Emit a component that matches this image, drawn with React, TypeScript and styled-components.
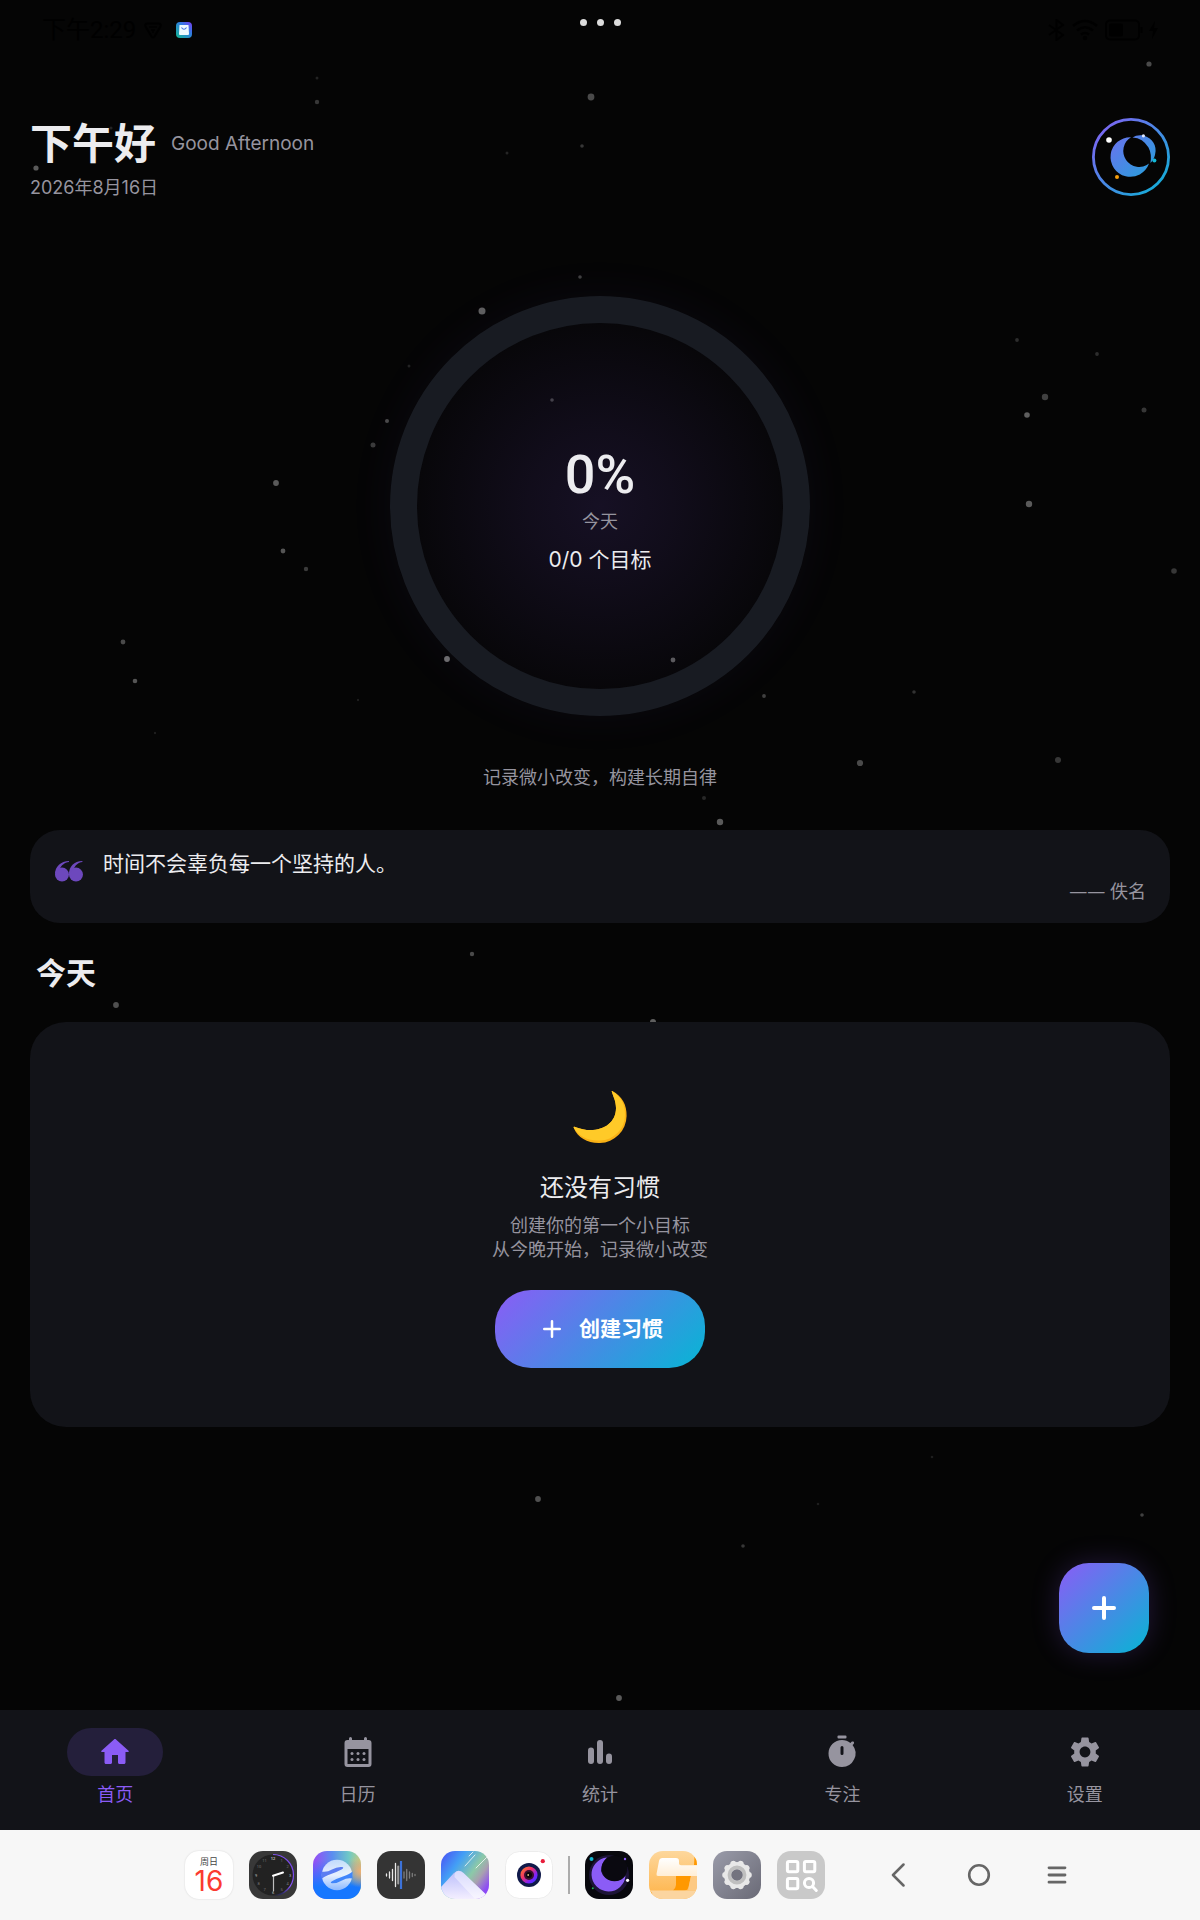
import React, { useState } from "react";
import styled, { createGlobalStyle, css } from "styled-components";
import { MdSettings } from "react-icons/md";

const color = {
  page: "#050505",
  surface: "#121318",
  track: "#181b22",
  text: "#ececef",
  muted: "#96949f",
  violet: "#8b5cf6",
  cyan: "#06b6d4",
  dock: "#f7f7f7",
  dockInk: "#666666",
};

const bodyFont = `Inter, "Noto Sans CJK SC", sans-serif`;
const displayFont = `Roboto, "Noto Sans CJK SC", sans-serif`;
const cjkFont = `"Noto Sans CJK SC", sans-serif`;
const brand = `linear-gradient(135deg, ${color.violet}, ${color.cyan})`;

const GlobalStyle = createGlobalStyle`
  *, *::before, *::after { box-sizing: border-box; }
  body { margin: 0; background: ${color.page}; }
  h1, h2, h3, p, blockquote, figure { margin: 0; font-weight: 400; }
  button { border: 0; padding: 0; background: none; color: inherit; font: inherit; cursor: pointer; }
  svg { display: block; }
`;

const Screen = styled.div`
  position: relative;
  display: flex;
  flex-direction: column;
  min-height: 100vh;
  background: ${color.page};
  color: ${color.text};
  font-family: ${bodyFont};
  font-size: 18px;
  line-height: 24px;
`;

/* ---------- star field ---------- */

const Sky = styled.svg`
  position: absolute;
  inset: 0;
  width: 100%;
  height: 100%;
  pointer-events: none;
`;

const stars: [number, number, number, number][] = [
  [317, 78, 1.5, 0.12], [317, 102, 2.2, 0.2], [591, 97, 3.4, 0.28], [1149, 64, 2.6, 0.28],
  [582, 146, 1.8, 0.2], [507, 153, 1.5, 0.13], [36, 168, 2.6, 0.34], [111, 128, 1.6, 0.12],
  [580, 277, 1.8, 0.24], [482, 311, 3.5, 0.36], [409, 366, 1.5, 0.12], [387, 421, 2, 0.28],
  [373, 445, 2.5, 0.22], [552, 400, 1.8, 0.24], [276, 483, 2.9, 0.34], [283, 551, 2.4, 0.32],
  [306, 569, 2.2, 0.22], [123, 642, 2.4, 0.28], [135, 681, 2.3, 0.32], [155, 733, 1.2, 0.1],
  [358, 700, 1.2, 0.1], [447, 659, 2.9, 0.42], [673, 660, 2.4, 0.34], [764, 696, 1.9, 0.24],
  [914, 692, 1.8, 0.18], [860, 763, 3.1, 0.28], [1058, 760, 3, 0.2], [704, 798, 2, 0.14],
  [720, 822, 3.2, 0.34], [1017, 340, 1.9, 0.16], [1097, 354, 1.9, 0.16], [1045, 397, 3.2, 0.24],
  [1027, 415, 2.8, 0.36], [1144, 410, 2.5, 0.2], [1029, 504, 3.2, 0.34], [1174, 571, 2.8, 0.2],
  [472, 954, 2.2, 0.28], [116, 1005, 2.9, 0.3], [653, 1022, 3, 0.36], [538, 1499, 2.9, 0.3],
  [743, 1546, 1.8, 0.2], [818, 1504, 1.3, 0.1], [932, 1457, 1.3, 0.1], [1142, 1515, 1.8, 0.24],
  [619, 1698, 2.9, 0.34],
];

/* ---------- status bar ---------- */

const StatusBar = styled.div`
  position: relative;
  display: grid;
  grid-template-columns: 1fr auto 1fr;
  align-items: center;
  height: 60px;
  padding: 0 42px;
  color: #000000;
`;

const StatusGroup = styled.div<{ $end?: boolean }>`
  display: flex;
  align-items: center;
  gap: ${(p) => (p.$end ? 6 : 8)}px;
  ${(p) => p.$end && css`justify-content: flex-end;`}
`;

const Clock = styled.time`
  font-family: ${displayFont};
  font-size: 24px;
  line-height: 30px;
`;

const NoticeIcon = styled.svg`
  margin-left: 6px;
`;

const WindowDots = styled.div`
  display: flex;
  gap: 10px;
  align-self: start;
  padding-top: 19px;

  i {
    width: 7px;
    height: 7px;
    border-radius: 50%;
    background: #dcdcdc;
  }
`;

/* ---------- content ---------- */

const Main = styled.main`
  position: relative;
  flex: 1;
  display: flex;
  flex-direction: column;
  padding: 58px 30px 180px;
`;

const Header = styled.header`
  display: flex;
  justify-content: space-between;
  align-items: flex-start;
`;

const Greeting = styled.div`
  display: flex;
  align-items: center;
  gap: 15px;
  height: 52px;
`;

const GreetingTitle = styled.h1`
  font-size: 42px;
  line-height: 52px;
  font-weight: 700;
`;

const GreetingNote = styled.span`
  font-size: 19px;
  color: ${color.muted};
`;

const DateLine = styled.p`
  margin-top: 6px;
  color: ${color.muted};
`;

const ProgressFigure = styled.section`
  display: flex;
  flex-direction: column;
  align-items: center;
  margin-top: 96px;
`;

const Ring = styled.div`
  display: flex;
  flex-direction: column;
  align-items: center;
  width: 420px;
  height: 420px;
  padding-top: 122px;
  border: 27px solid ${color.track};
  border-radius: 50%;
  background: radial-gradient(circle closest-side, rgba(139, 92, 246, 0.13) 0%, rgba(139, 92, 246, 0.09) 40%, rgba(139, 92, 246, 0.02) 100%);
  box-shadow: 0 0 50px rgba(139, 92, 246, 0.05);
`;

const Percent = styled.strong`
  font-family: ${displayFont};
  font-size: 54px;
  line-height: 60px;
  font-weight: 500;
`;

const RingLabel = styled.span`
  margin-top: 5px;
  color: ${color.muted};
`;

const RingCount = styled.span`
  margin-top: 12px;
  font-size: 21px;
  line-height: 28px;
`;

const Slogan = styled.p`
  margin-top: 50px;
  color: ${color.muted};
`;

const QuoteCard = styled.figure`
  display: flex;
  gap: 20px;
  margin-top: 40px;
  padding: 16px 24px 20px 25px;
  border-radius: 30px;
  background: ${color.surface};

  > svg {
    margin-top: 15px;
  }
`;

const QuoteBody = styled.div`
  flex: 1;
  display: flex;
  flex-direction: column;
  gap: 1px;

  blockquote {
    font-family: ${cjkFont};
    font-size: 21px;
    line-height: 32px;
  }

  figcaption {
    align-self: flex-end;
    font-family: "Noto Sans", ${cjkFont};
    color: ${color.muted};
  }
`;

const SectionTitle = styled.h2`
  margin-top: 32px;
  padding-left: 6px;
  font-size: 30px;
  line-height: 36px;
  font-weight: 700;
`;

const EmptyCard = styled.section`
  display: flex;
  flex-direction: column;
  align-items: center;
  margin-top: 31px;
  padding: 68px 24px 59px;
  border-radius: 36px;
  background: ${color.surface};
`;

const EmptyTitle = styled.h3`
  margin-top: 26px;
  font-size: 24px;
  line-height: 36px;
`;

const EmptyHint = styled.p`
  margin-top: 8px;
  text-align: center;
  color: ${color.muted};
`;

const CreateButton = styled.button`
  display: flex;
  align-items: center;
  justify-content: center;
  gap: 18px;
  width: 210px;
  height: 78px;
  margin-top: 28px;
  padding-left: 6px;
  border-radius: 36px;
  background: ${brand};
  color: #ffffff;
  font-size: 21px;
  font-weight: 700;
`;

const FloatingButton = styled.button`
  position: absolute;
  right: 51px;
  bottom: 57px;
  display: grid;
  place-items: center;
  width: 90px;
  height: 90px;
  border-radius: 30px;
  background: ${brand};
  color: #ffffff;
  box-shadow: 0 0 28px rgba(139, 92, 246, 0.22);
`;

/* ---------- tabs ---------- */

const TabBar = styled.nav`
  position: relative;
  display: grid;
  grid-template-columns: repeat(5, 1fr);
  gap: 12px;
  height: 120px;
  padding-top: 18px;
  background: ${color.surface};
`;

const Tab = styled.button<{ $active: boolean }>`
  display: flex;
  flex-direction: column;
  align-items: center;
  align-self: start;
  gap: 7px;
  color: ${(p) => (p.$active ? color.violet : color.muted)};
`;

const TabPill = styled.span<{ $active: boolean }>`
  display: grid;
  place-items: center;
  width: 96px;
  height: 48px;
  border-radius: 24px;
  background: ${(p) => (p.$active ? "#241f3b" : "transparent")};
`;

/* ---------- dock ---------- */

const Dock = styled.footer`
  position: relative;
  display: flex;
  align-items: center;
  justify-content: center;
  gap: 52px;
  height: 90px;
  padding-left: 66px;
  background: ${color.dock};
`;

const AppRow = styled.div`
  display: flex;
  align-items: center;
  gap: 16px;
`;

const AppIcon = styled.button`
  width: 48px;
  height: 48px;
  border-radius: 14px;
  overflow: hidden;
`;

const CalendarTile = styled(AppIcon)`
  display: flex;
  flex-direction: column;
  align-items: center;
  padding-top: 5px;
  background: #ffffff;
  box-shadow: 0 0 2px rgba(0, 0, 0, 0.14);
  color: #444444;
  font-size: 9px;
  line-height: 12px;

  b {
    font-size: 28px;
    line-height: 26px;
    font-weight: 400;
    color: #fb3b30;
  }
`;

const DockDivider = styled.hr`
  width: 2px;
  height: 38px;
  margin: 0 -1px;
  border: 0;
  background: #acacac;
`;

const SystemKeys = styled.div`
  display: flex;
  align-items: center;
  gap: 30px;
  color: ${color.dockInk};
`;

const SystemKey = styled.button`
  display: grid;
  place-items: center;
  width: 48px;
  height: 48px;
`;

/* ---------- drawings ---------- */

const Plus = ({ size, width }: { size: number; width: number }) => (
  <svg width={size} height={size} viewBox={`0 0 ${size} ${size}`} aria-hidden="true">
    <path
      d={`M${size / 2} ${width / 2}V${size - width / 2}M${width / 2} ${size / 2}H${size - width / 2}`}
      stroke="currentColor"
      strokeWidth={width}
      strokeLinecap="round"
    />
  </svg>
);

const MoonAvatar = () => (
  <svg width="78" height="78" viewBox="0 0 78 78" aria-hidden="true">
    <defs>
      <linearGradient id="avatar" x1="0" y1="0" x2="78" y2="78" gradientUnits="userSpaceOnUse">
        <stop stopColor={color.violet} />
        <stop offset="1" stopColor={color.cyan} />
      </linearGradient>
    </defs>
    <circle cx="39" cy="39" r="37.6" fill="none" stroke="url(#avatar)" strokeWidth="2.8" />
    <path
      fill="url(#avatar)"
      d="M39 19.2A19.8 19.8 0 1 0 57 45.6A16 16 0 1 1 39 19.2Z"
    />
    <path
      fill="url(#avatar)"
      d="M40.500 19.400Q44 17 49 17.200C58 18 64 25 63.600 33Q63 41 58.400 45Q60 36 56.500 29.500Q51 20 40.500 19.400Z"
    />
    <circle cx="17" cy="22" r="2.8" fill="#fff" />
    <circle cx="51.4" cy="17.8" r="1.6" fill="#dfe8ff" />
    <circle cx="62.4" cy="42.5" r="2" fill="#12b9d6" />
    <circle cx="25" cy="59" r="2" fill="#f59e0b" />
  </svg>
);

const QuoteMark = () => (
  <svg width="28" height="21" viewBox="0 0 28 21" fill="#6d48bd" aria-hidden="true">
    <circle cx="7" cy="13.6" r="7" />
    <circle cx="21" cy="13.6" r="7" />
    <path d="M0 13.2C0 5.4 6 .2 14 0v.9C9.4 1.5 6 4.4 5 7.6Z" />
    <path d="M14 13.2C14 5.4 19 .2 27.4 0v.9C23 1.5 20 4.4 19 7.6Z" />
  </svg>
);

const CrescentMoon = () => (
  <svg width="54" height="54" viewBox="0 0 54 54" aria-hidden="true">
    <path d="M39.2 1C49 6 54 15 53.6 26A27.500 27.500 0 0 1 27 53C15 53.5 5 48 .8 38C.4 37 1 36.6 2 37C22 45 43 37 43 18C43 11 40 6 38.8 1.8C38.6 1 38.8 .8 39.2 1Z" fill="#f9b115" />
    <path d="M39.2 1C48 6.5 52.4 15 52 25A25.500 25.500 0 0 1 27 50.5C15 51 6 46.5 .8 38C.4 37 1 36.6 2 37C22 45 43 37 43 18C43 11 40 6 38.8 1.8C38.6 1 38.8 .8 39.2 1Z" fill="#ffca28" />
  </svg>
);

const tabIcon = { width: 36, height: 36, viewBox: "0 0 24 24", fill: "currentColor", "aria-hidden": true };

const HomeIcon = () => (
  <svg {...tabIcon}>
    <path d="M10 19v-5h4v5c0 .55.45 1 1 1h3c.55 0 1-.45 1-1v-7h1.7c.46 0 .68-.57.33-.87L12.67 3.6c-.38-.34-.96-.34-1.34 0l-8.36 7.53c-.34.3-.13.87.33.87H5v7c0 .55.45 1 1 1h3c.55 0 1-.45 1-1z" />
  </svg>
);

const MonthIcon = () => (
  <svg {...tabIcon}>
    <path
      fillRule="evenodd"
      d="M8 3v1h8V3a1 1 0 0 1 2 0v1h1a2 2 0 0 1 2 2v14a2 2 0 0 1-2 2H5a2 2 0 0 1-2-2V6a2 2 0 0 1 2-2h1V3a1 1 0 0 1 2 0ZM5 10v10h14V10Z"
    />
    {[13, 17].map((y) => [8, 12, 16].map((x) => <circle key={`${x}-${y}`} cx={x} cy={y} r="1" />))}
  </svg>
);

const BarsIcon = () => (
  <svg {...tabIcon}>
    <rect x="4" y="9" width="4" height="11" rx="2" />
    <rect x="10" y="4" width="4" height="16" rx="2" />
    <rect x="16" y="13" width="4" height="7" rx="2" />
  </svg>
);

const TimerIcon = () => (
  <svg {...tabIcon}>
    <rect x="9" y="1" width="6" height="2" rx=".7" />
    <path
      fillRule="evenodd"
      d="M19.03 7.39l.75-.75c.38-.38.39-1.01 0-1.4l-.01-.01c-.39-.39-1.01-.38-1.4 0l-.75.75C16.07 4.74 14.12 4 12 4c-4.8 0-8.88 3.96-9 8.76A9 9 0 0 0 12 22a9 9 0 0 0 7.03-14.61ZM13 13a1 1 0 0 1-2 0V9a1 1 0 0 1 2 0Z"
    />
  </svg>
);

const art = { width: 48, height: 48, viewBox: "0 0 48 48", "aria-hidden": true };

const ClockArt = () => (
  <svg {...art}>
    <defs>
      <linearGradient id="clockEdge" x1="1" y1="0" x2="0" y2="1">
        <stop stopColor="#6d3fd8" />
        <stop offset=".45" stopColor="#8a55ff" />
        <stop offset=".75" stopColor="#2b2a66" />
        <stop offset="1" stopColor="#2c2c2c" />
      </linearGradient>
    </defs>
    <rect width="48" height="48" fill="#383838" />
    <circle cx="24" cy="24" r="20.5" fill="#222222" />
    <path d="M24 3.5A20.5 20.5 0 0 1 24 44.5" fill="none" stroke="url(#clockEdge)" strokeWidth="1.2" />
    <g fill="#777" fontFamily="Roboto, sans-serif" fontSize="4" textAnchor="middle">
      <text x="24" y="9" fill="#fff">12</text>
      <text x="32.5" y="11">1</text>
      <text x="38.5" y="17">2</text>
      <text x="41" y="25.5" fill="#bbb">3</text>
      <text x="38.5" y="34">4</text>
      <text x="32.5" y="39.5">5</text>
      <text x="24" y="42.5" fill="#bbb">6</text>
      <text x="15.5" y="39.5">7</text>
      <text x="9.5" y="34">8</text>
      <text x="7" y="25.5" fill="#bbb">9</text>
      <text x="10" y="17">10</text>
      <text x="15.5" y="11">11</text>
    </g>
    <path d="M24.5 25v15" stroke="#bdbdbd" strokeWidth="1.2" strokeLinecap="round" />
    <path d="M24 24.8L34 21.5" stroke="#fff" strokeWidth="2" strokeLinecap="round" />
  </svg>
);

const BrowserArt = () => (
  <svg {...art}>
    <defs>
      <linearGradient id="bBase" x1="0" y1="0" x2="1" y2="0">
        <stop stopColor="#9a4bf5" />
        <stop offset=".4" stopColor="#5a8df0" />
        <stop offset=".75" stopColor="#6fc9c6" />
        <stop offset="1" stopColor="#b9cf86" />
      </linearGradient>
      <linearGradient id="bFade" x1="0" y1="0" x2="0" y2="1">
        <stop offset=".2" stopColor="#1677ff" stopOpacity="0" />
        <stop offset=".75" stopColor="#1677ff" />
      </linearGradient>
      <radialGradient id="bWarm" cx="1" cy=".42" r=".35">
        <stop stopColor="#f0b070" />
        <stop offset="1" stopColor="#f0b070" stopOpacity="0" />
      </radialGradient>
      <linearGradient id="bGlobe" x1="0" y1="0" x2="0" y2="1">
        <stop stopColor="#cfe4ff" />
        <stop offset=".5" stopColor="#ffffff" />
        <stop offset="1" stopColor="#9cc2ff" />
      </linearGradient>
    </defs>
    <rect width="48" height="48" fill="url(#bBase)" />
    <rect width="48" height="48" fill="url(#bFade)" />
    <rect width="48" height="48" fill="url(#bWarm)" />
    <circle cx="24" cy="24" r="15.2" fill="url(#bGlobe)" fillOpacity=".88" />
    <path d="M8.500 20.500Q14 21.500 19 18.500T29 16Q31.500 16.500 29 18.300Q25 20.500 18 23T8.500 28Z" fill="#5b7df2" />
    <path d="M39.500 27.500Q34 26.500 29 29.500T19 32.300Q16.500 32 19 30.300Q23 27.800 30 25.500T39.500 20.500Z" fill="#3f86fb" />
  </svg>
);

const RecorderArt = () => (
  <svg {...art}>
    <rect width="48" height="48" fill="#343434" />
    <g strokeLinecap="round" strokeWidth="1.3" stroke="#e9e9e9">
      <path d="M9.500 23v2M12.500 21v6M15.500 18.500v11M18.500 12.500v23" />
      <path d="M21.200 15.500v17" stroke="#9b9b9b" strokeWidth="2" />
      <path d="M27 21v6M29.700 18.500v11M32.500 21v6M35.300 22.500v3M38 23.500v1" stroke="#7d7d7d" />
    </g>
    <path d="M24 10v28" stroke="#3c72d9" strokeWidth="2.200" />
  </svg>
);

const GalleryArt = () => (
  <svg {...art}>
    <defs>
      <linearGradient id="gSky" x1="0" y1="0" x2="1" y2=".7">
        <stop stopColor="#4a4cf5" />
        <stop offset=".35" stopColor="#43a0f5" />
        <stop offset=".65" stopColor="#8cc9a8" />
        <stop offset=".8" stopColor="#a8a0b0" />
        <stop offset="1" stopColor="#8d4bf5" />
      </linearGradient>
      <linearGradient id="gHill" x1=".5" y1="0" x2=".5" y2="1">
        <stop stopColor="#b9bdfb" />
        <stop offset="1" stopColor="#f4efff" />
      </linearGradient>
    </defs>
    <rect width="48" height="48" fill="url(#gSky)" />
    <path d="M0 36L12.500 22.500Q17.500 17.500 22.500 22L45 43.500V48H0Z" fill="url(#gHill)" />
    <path d="M13.500 26Q13 20 17.500 19.800Q20.500 20 22.500 22L45 43.500 41 48H34Z" fill="#fff" fillOpacity=".45" />
    <path d="M24 15L34 4M35 17L46 6M28 5l4-4" stroke="#fff" strokeOpacity=".75" strokeWidth="1" strokeLinecap="round" />
  </svg>
);

const CameraArt = () => (
  <svg {...art}>
    <defs>
      <linearGradient id="lens" x1="0" y1="0" x2="1" y2="1">
        <stop stopColor="#ff8a1e" />
        <stop offset=".4" stopColor="#f0306a" />
        <stop offset=".7" stopColor="#7a22ff" />
        <stop offset="1" stopColor="#2340ff" />
      </linearGradient>
    </defs>
    <rect x=".5" y=".5" width="47" height="47" rx="14" fill="#fff" stroke="#ececec" />
    <circle cx="24" cy="24" r="12" fill="#101a4a" />
    <circle cx="24" cy="24" r="8.600" fill="url(#lens)" />
    <circle cx="24" cy="24" r="5" fill="#3a1030" />
    <circle cx="24" cy="24" r="3" fill="#0b0508" />
    <circle cx="23.200" cy="24" r=".9" fill="#d8c08a" />
    <circle cx="37.800" cy="10.200" r="2.100" fill="#e81e3c" />
  </svg>
);

const HabitArt = () => (
  <svg {...art}>
    <rect width="48" height="48" fill="#08080d" />
    <circle cx="24" cy="24" r="20" fill="#1d1436" />
    <path d="M22 6.500A17 17 0 1 0 40.500 24.500 14 14 0 0 1 16 20Q16 12 22 6.500Z" fill={color.violet} />
    <circle cx="29.500" cy="17.500" r="12.800" fill="#0a0910" />
    <circle cx="6.500" cy="8" r="2" fill="#12b5cf" />
    <circle cx="40" cy="8" r="1.200" fill={color.violet} />
    <circle cx="42.600" cy="29.300" r="1.600" fill="#fff" />
    <circle cx="7.800" cy="37.300" r="1" fill="#22b455" />
  </svg>
);

const FilesArt = () => (
  <svg {...art}>
    <defs>
      <linearGradient id="fBase" x1="0" y1="0" x2="0" y2="1">
        <stop stopColor="#fdd79c" />
        <stop offset="1" stopColor="#ffb347" />
      </linearGradient>
      <linearGradient id="fTop" x1="0" y1="0" x2="0" y2="1">
        <stop stopColor="#ffffff" />
        <stop offset="1" stopColor="#ffeed6" />
      </linearGradient>
    </defs>
    <rect width="48" height="48" fill="url(#fBase)" />
    <path d="M27 25H42L39.500 36Q38.500 39.500 35.500 39.500H24Q26.500 38 27 34Z" fill="#ff9800" />
    <path d="M45.500 6L48 4V14H45Z" fill="#ff9800" />
    <path d="M0 39.500H48V48H0Z" fill="#fbd5a0" />
    <path d="M0 39.500q3 1 3.500 4L0 42Z" fill="#ff9800" />
    <path d="M42 25h6v14.500h-9Z" fill="#fdc983" />
    <path d="M10 10q.6-3 3.500-3H27q3 0 3 3v2.500q0 1.700 2 1.700H48V25H9q-1.800 0-1.500-2Z" fill="url(#fTop)" />
  </svg>
);

const SettingsArt = () => (
  <svg {...art}>
    <defs>
      <linearGradient id="sBase" x1="0" y1="0" x2="1" y2="1">
        <stop stopColor="#9a9ba9" />
        <stop offset="1" stopColor="#6a6a76" />
      </linearGradient>
    </defs>
    <rect width="48" height="48" fill="url(#sBase)" />
    <g fill="#e8e8e8">
      <circle cx="24" cy="24" r="13" />
      {Array.from({ length: 10 }, (_, i) => (
        <circle key={i} cx="24" cy="12.200" r="3" transform={`rotate(${18 + i * 36} 24 24)`} />
      ))}
    </g>
    <circle cx="24" cy="24" r="7.700" fill="none" stroke="#bfbfbf" strokeWidth="3.400" />
    <circle cx="24" cy="24" r="5.800" fill="#73737f" />
  </svg>
);

const DrawerArt = () => (
  <svg {...art}>
    <rect width="48" height="48" fill="#c9c9c9" />
    <g fill="none" stroke="#fff" strokeWidth="3">
      <rect x="10.400" y="10.400" width="10.400" height="10.400" rx="1.500" />
      <rect x="27.400" y="10.400" width="10.400" height="10.400" rx="1.500" />
      <rect x="10.400" y="27.400" width="10.400" height="10.400" rx="1.500" />
      <circle cx="32" cy="32" r="4.600" />
      <path d="M35.500 35.500l3.800 4" strokeLinecap="round" />
    </g>
  </svg>
);

const recentApps = [
  { name: "时钟", Art: ClockArt },
  { name: "浏览器", Art: BrowserArt },
  { name: "录音机", Art: RecorderArt },
  { name: "相册", Art: GalleryArt },
  { name: "相机", Art: CameraArt },
];

const pinnedApps = [
  { name: "习惯", Art: HabitArt },
  { name: "文件管理", Art: FilesArt },
  { name: "系统设置", Art: SettingsArt },
  { name: "全部应用", Art: DrawerArt },
];

const tabs = [
  { label: "首页", icon: <HomeIcon /> },
  { label: "日历", icon: <MonthIcon /> },
  { label: "统计", icon: <BarsIcon /> },
  { label: "专注", icon: <TimerIcon /> },
  { label: "设置", icon: <MdSettings size={36} /> },
];

export default function App() {
  const [active, setActive] = useState("首页");

  return (
    <Screen lang="zh-CN">
      <GlobalStyle />
      <Sky aria-hidden="true">
        {stars.map(([x, y, r, o]) => (
          <circle key={`${x}-${y}`} cx={`${x / 12}%`} cy={y} r={r} fill="#fff" fillOpacity={o} />
        ))}
      </Sky>

      <StatusBar>
        <StatusGroup>
          <Clock>下午2:29</Clock>
          <svg width="18" height="17" viewBox="0 0 18 17" aria-hidden="true">
            <path d="M3 1.500H15Q17.500 2 16.500 4.500L10.500 14.500Q9 16.500 7.500 14.500L1.500 4.500Q.5 2 3 1.500Z" fill="none" stroke="currentColor" strokeWidth="2" />
            <path d="M5 5h8M7 8h4M9 8v3" stroke="currentColor" strokeWidth="1.500" />
          </svg>
          <NoticeIcon width="16" height="16" viewBox="0 0 16 16" aria-hidden="true">
            <defs>
              <linearGradient id="shop" x1="1" y1="0" x2="0" y2="1">
                <stop stopColor="#7a3cf5" />
                <stop offset=".4" stopColor="#2f7de0" />
                <stop offset="1" stopColor="#12b892" />
              </linearGradient>
            </defs>
            <rect width="16" height="16" rx="4" fill="url(#shop)" />
            <path d="M3.500 3h9l.5 9q0 1-1 1H4q-1 0-1-1Z" fill="#eefaff" />
            <path d="M5.500 5.500q2.500 3.500 5 0" fill="none" stroke="#3f6fe0" strokeWidth="1.100" />
          </NoticeIcon>
        </StatusGroup>
        <WindowDots aria-hidden="true"><i /><i /><i /></WindowDots>
        <StatusGroup $end>
          <svg width="17" height="22" viewBox="0 0 17 22" fill="none" stroke="currentColor" strokeWidth="2" aria-hidden="true">
            <path d="M1 6L15 16L8.500 21V1L15 6L1 16" />
          </svg>
          <svg width="28" height="22" viewBox="0 0 28 22" fill="none" stroke="currentColor" strokeWidth="2.500" aria-hidden="true">
            <path d="M2 7Q14-3 26 7M6 11.500Q14 5 22 11.500M10 15.500Q14 12.500 18 15.500" />
            <circle cx="14" cy="19" r="1" />
          </svg>
          <svg width="38" height="22" viewBox="0 0 38 22" aria-hidden="true">
            <rect x="1" y="1.500" width="33" height="19" rx="4" fill="none" stroke="currentColor" strokeWidth="2" />
            <rect x="4" y="4.500" width="14" height="13" rx="2" fill="currentColor" />
            <path d="M36.500 8v6" stroke="currentColor" strokeWidth="2" />
          </svg>
          <svg width="9" height="18" viewBox="0 0 9 18" fill="currentColor" aria-hidden="true">
            <path d="M6 0L0 10H4L3 18L9 7H5Z" />
          </svg>
        </StatusGroup>
      </StatusBar>

      <Main>
        <Header>
          <div>
            <Greeting>
              <GreetingTitle>下午好</GreetingTitle>
              <GreetingNote>Good Afternoon</GreetingNote>
            </Greeting>
            <DateLine>2026年8月16日</DateLine>
          </div>
          <button type="button" aria-label="个人主页">
            <MoonAvatar />
          </button>
        </Header>

        <ProgressFigure>
          <Ring>
            <Percent>0%</Percent>
            <RingLabel>今天</RingLabel>
            <RingCount>0/0 个目标</RingCount>
          </Ring>
          <Slogan>记录微小改变，构建长期自律</Slogan>
        </ProgressFigure>

        <QuoteCard>
          <QuoteMark />
          <QuoteBody>
            <blockquote>时间不会辜负每一个坚持的人。</blockquote>
            <figcaption>—— 佚名</figcaption>
          </QuoteBody>
        </QuoteCard>

        <SectionTitle>今天</SectionTitle>
        <EmptyCard>
          <CrescentMoon />
          <EmptyTitle>还没有习惯</EmptyTitle>
          <EmptyHint>
            创建你的第一个小目标
            <br />
            从今晚开始，记录微小改变
          </EmptyHint>
          <CreateButton type="button">
            <Plus size={18} width={2.5} />
            创建习惯
          </CreateButton>
        </EmptyCard>

        <FloatingButton type="button" aria-label="新建习惯">
          <Plus size={24} width={4} />
        </FloatingButton>
      </Main>

      <TabBar>
        {tabs.map(({ label, icon }) => (
          <Tab key={label} type="button" $active={label === active} onClick={() => setActive(label)}>
            <TabPill $active={label === active}>{icon}</TabPill>
            {label}
          </Tab>
        ))}
      </TabBar>

      <Dock>
        <AppRow>
          <CalendarTile type="button">
            周日<b>16</b>
          </CalendarTile>
          {recentApps.map(({ name, Art }) => (
            <AppIcon key={name} type="button" aria-label={name}>
              <Art />
            </AppIcon>
          ))}
          <DockDivider />
          {pinnedApps.map(({ name, Art }) => (
            <AppIcon key={name} type="button" aria-label={name}>
              <Art />
            </AppIcon>
          ))}
        </AppRow>
        <SystemKeys>
          <SystemKey type="button" aria-label="返回">
            <svg width="20" height="24" viewBox="0 0 20 24" fill="none" stroke="currentColor" strokeWidth="2.500" strokeLinecap="round" strokeLinejoin="round" aria-hidden="true">
              <path d="M12.500 1.500L2 12L12.500 22.500" />
            </svg>
          </SystemKey>
          <SystemKey type="button" aria-label="主屏幕">
            <svg width="24" height="24" viewBox="0 0 24 24" fill="none" stroke="currentColor" strokeWidth="2.600" aria-hidden="true">
              <circle cx="12" cy="12" r="9.800" />
            </svg>
          </SystemKey>
          <SystemKey type="button" aria-label="最近任务">
            <svg width="20" height="20" viewBox="0 0 20 20" stroke="currentColor" strokeWidth="2.800" strokeLinecap="round" aria-hidden="true">
              <path d="M2 2.800H18M2 10H18M2 17.200H18" />
            </svg>
          </SystemKey>
        </SystemKeys>
      </Dock>
    </Screen>
  );
}
